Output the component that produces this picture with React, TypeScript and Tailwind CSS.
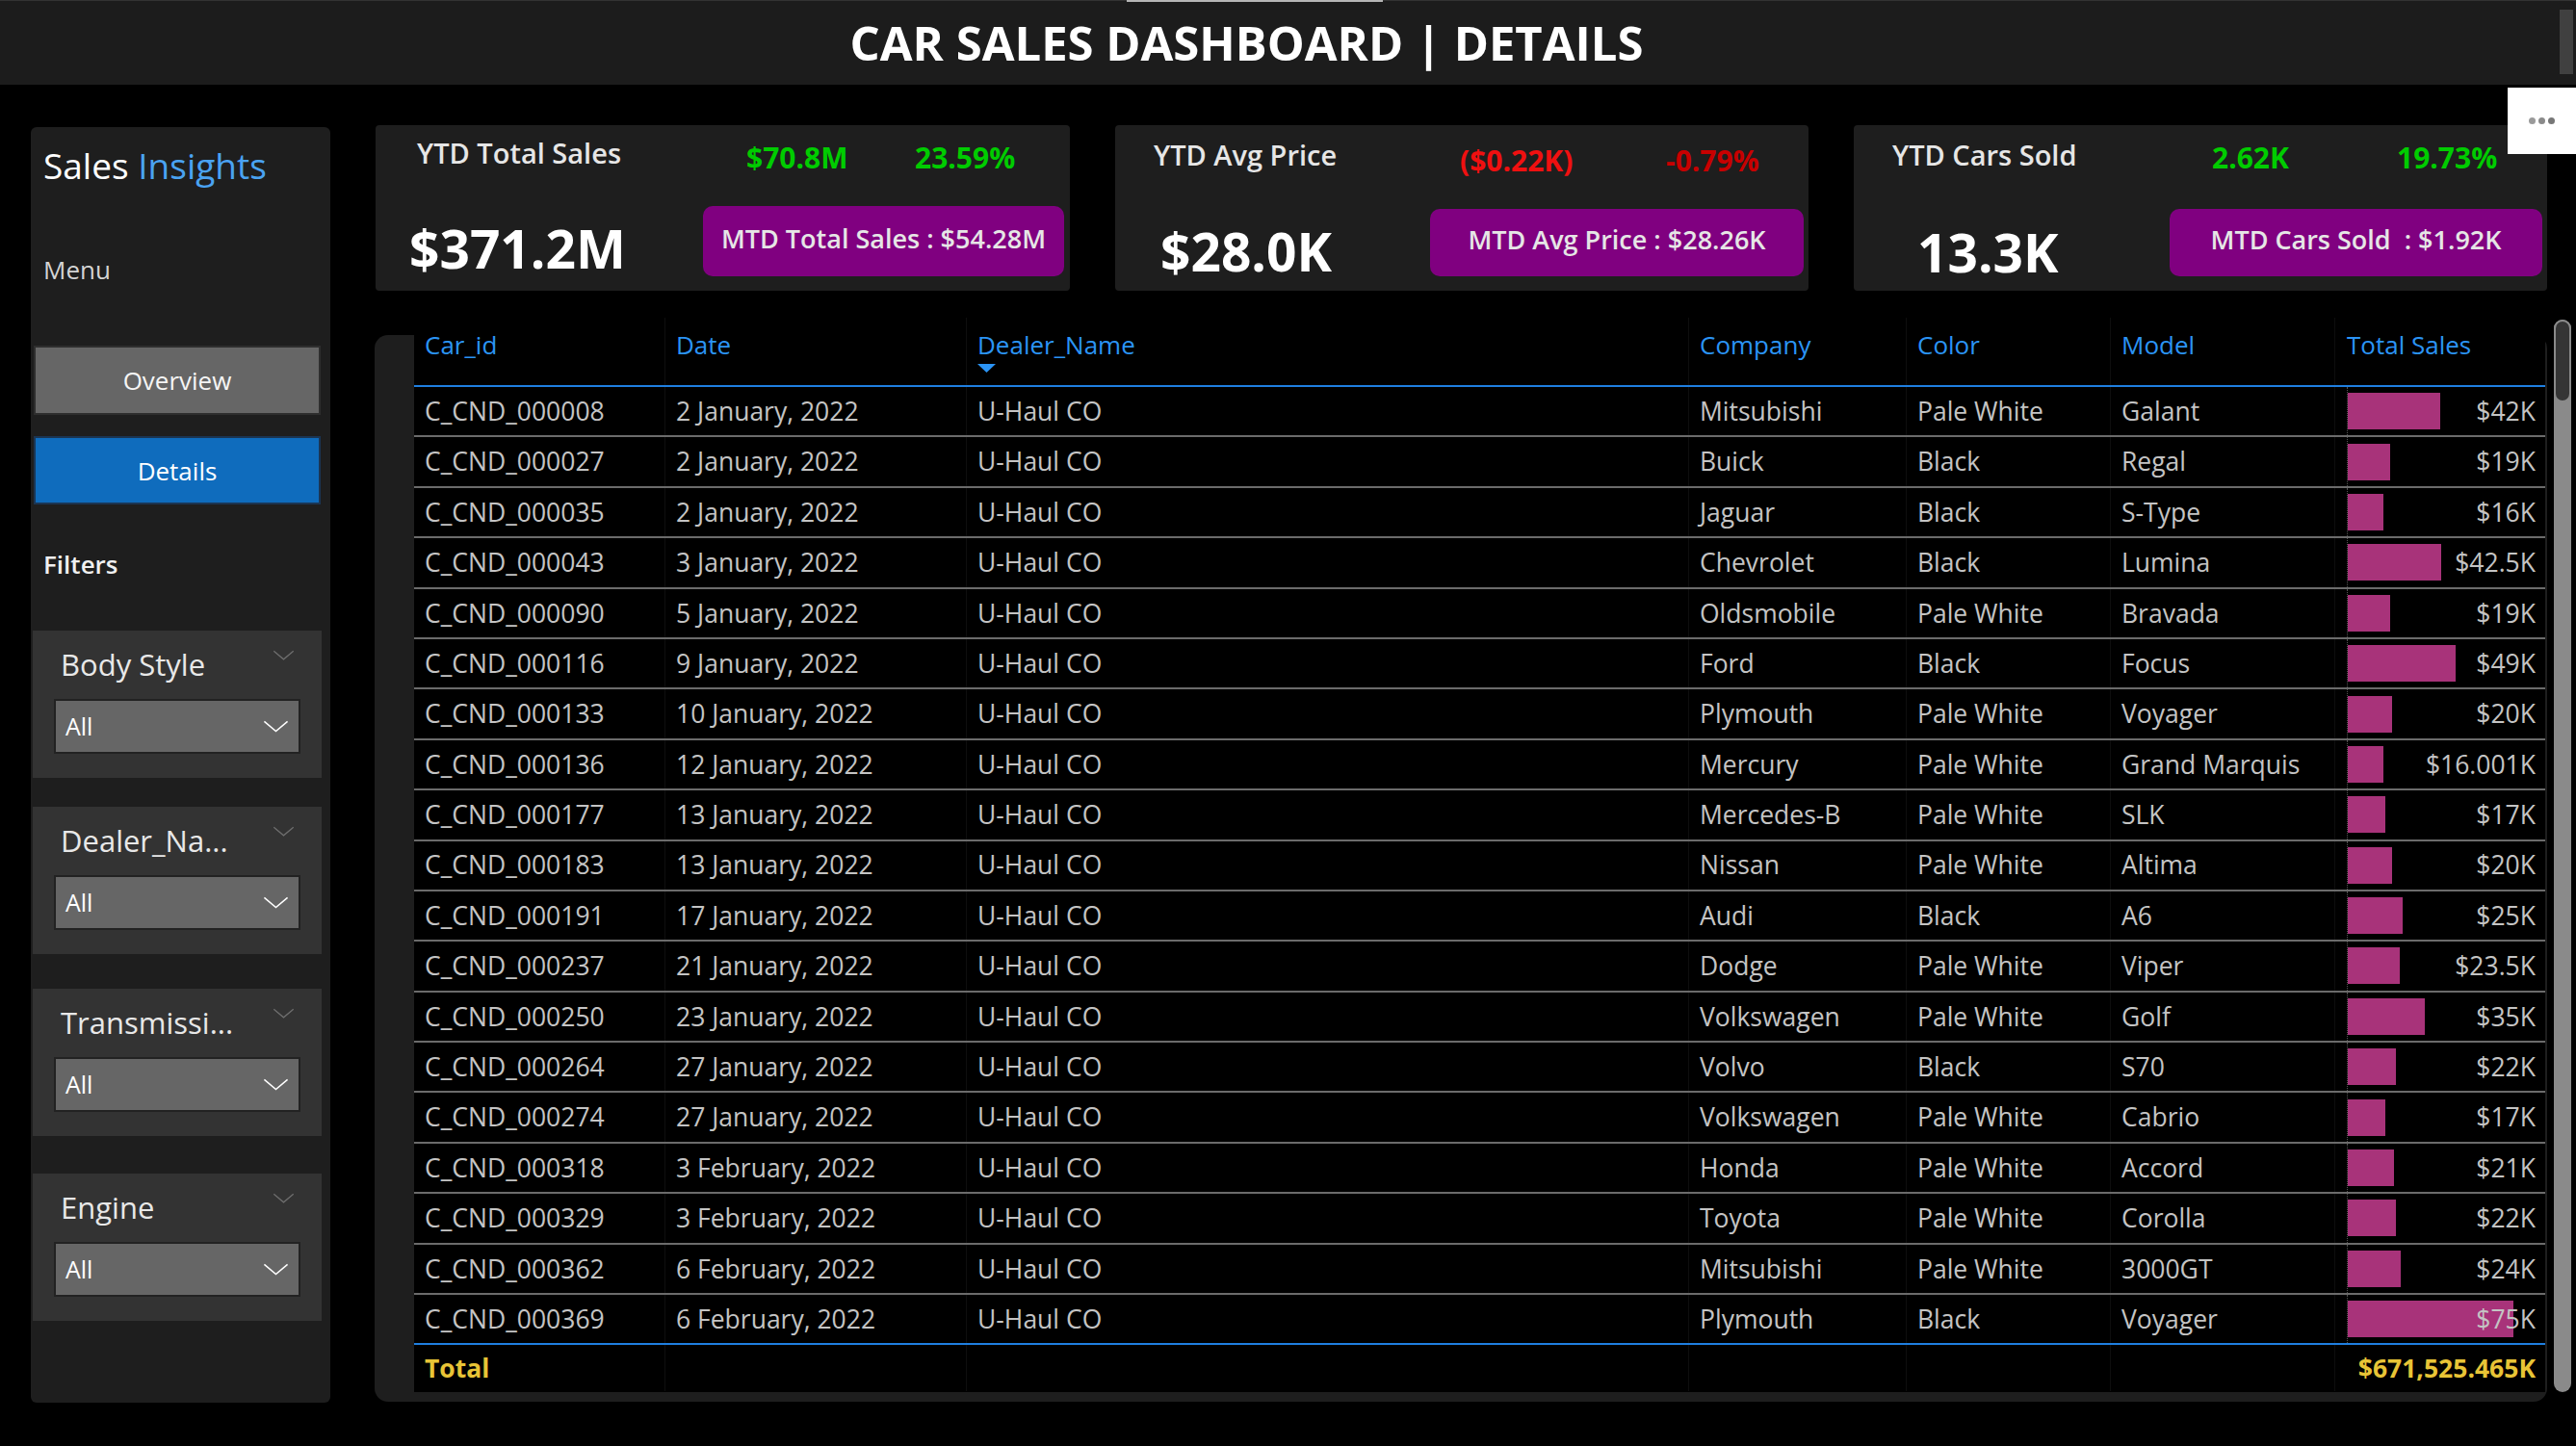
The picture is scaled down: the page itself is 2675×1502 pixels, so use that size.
import React from "react";

type Row = [string, string, string, string, string, number, string];

const rows: Row[] = [
  ["C_CND_000008", "2 January, 2022", "Mitsubishi", "Pale White", "Galant", 42, "$42K"],
  ["C_CND_000027", "2 January, 2022", "Buick", "Black", "Regal", 19, "$19K"],
  ["C_CND_000035", "2 January, 2022", "Jaguar", "Black", "S-Type", 16, "$16K"],
  ["C_CND_000043", "3 January, 2022", "Chevrolet", "Black", "Lumina", 42.5, "$42.5K"],
  ["C_CND_000090", "5 January, 2022", "Oldsmobile", "Pale White", "Bravada", 19, "$19K"],
  ["C_CND_000116", "9 January, 2022", "Ford", "Black", "Focus", 49, "$49K"],
  ["C_CND_000133", "10 January, 2022", "Plymouth", "Pale White", "Voyager", 20, "$20K"],
  ["C_CND_000136", "12 January, 2022", "Mercury", "Pale White", "Grand Marquis", 16.001, "$16.001K"],
  ["C_CND_000177", "13 January, 2022", "Mercedes-B", "Pale White", "SLK", 17, "$17K"],
  ["C_CND_000183", "13 January, 2022", "Nissan", "Pale White", "Altima", 20, "$20K"],
  ["C_CND_000191", "17 January, 2022", "Audi", "Black", "A6", 25, "$25K"],
  ["C_CND_000237", "21 January, 2022", "Dodge", "Pale White", "Viper", 23.5, "$23.5K"],
  ["C_CND_000250", "23 January, 2022", "Volkswagen", "Pale White", "Golf", 35, "$35K"],
  ["C_CND_000264", "27 January, 2022", "Volvo", "Black", "S70", 22, "$22K"],
  ["C_CND_000274", "27 January, 2022", "Volkswagen", "Pale White", "Cabrio", 17, "$17K"],
  ["C_CND_000318", "3 February, 2022", "Honda", "Pale White", "Accord", 21, "$21K"],
  ["C_CND_000329", "3 February, 2022", "Toyota", "Pale White", "Corolla", 22, "$22K"],
  ["C_CND_000362", "6 February, 2022", "Mitsubishi", "Pale White", "3000GT", 24, "$24K"],
  ["C_CND_000369", "6 February, 2022", "Plymouth", "Black", "Voyager", 75, "$75K"],
];

const cols = "grid grid-cols-[260px_313px_750px_226px_212px_233px_219px]";
const cell = "pl-[11px] flex items-center border-l border-[#0e0e0e]";

function Chevron({ className }: { className: string }) {
  return (
    <svg viewBox="0 0 28 14" className={className} fill="none" stroke="currentColor" strokeWidth="1.6">
      <polyline points="1,1.5 14,12.5 27,1.5" />
    </svg>
  );
}

function Filter({ title, mt }: { title: string; mt: string }) {
  return (
    <div className={`${mt} ml-[2px] w-[300px] h-[153px] bg-[#333333] flex flex-col`}>
      <div className="flex items-start pt-[20px]">
        <span className="ml-[29px] w-[220px] text-[31px] leading-none text-[#e8e8e8] whitespace-nowrap">{title}</span>
        <Chevron className="mt-[0px] w-[23px] h-[11px] text-[#6e6e6e]" />
      </div>
      <div className="mt-[20px] ml-[22px] w-[256px] h-[57px] bg-[#666666] border-2 border-[#222222] flex items-center">
        <span className="ml-[10px] text-[25px] leading-none text-white">All</span>
        <Chevron className="ml-auto mr-[10px] w-[27px] h-[13px] text-white" />
      </div>
    </div>
  );
}

export default function App() {
  return (
    <div className="w-[2675px] h-[1502px] bg-black relative overflow-hidden font-['Open_Sans',sans-serif]">
      {/* header */}
      <header className="h-[88px] bg-[#1c1c1c] border-t border-[#333333] flex items-center justify-center pr-[86px]">
        <h1 className="text-[49px] font-bold text-white leading-none whitespace-nowrap">CAR SALES DASHBOARD | DETAILS</h1>
      </header>
      <div className="absolute left-[1170px] top-0 w-[266px] h-[2px] bg-[#b5b5b5]" />
      <div className="absolute left-[2658px] top-[10px] w-[14px] h-[67px] bg-[#404040]" />
      <div className="absolute left-[2604px] top-[91px] w-[71px] h-[69px] bg-white flex items-center justify-center gap-[3px]">
        <span className="w-[7px] h-[7px] rounded-full bg-[#9a9a9a]" />
        <span className="w-[7px] h-[7px] rounded-full bg-[#8a8a8a]" />
        <span className="w-[7px] h-[7px] rounded-full bg-[#777777]" />
      </div>

      <div className="flex items-start">
        {/* sidebar */}
        <aside className="ml-[32px] mt-[44px] w-[311px] h-[1325px] bg-[#1e1e1e] rounded-[6px] flex flex-col shrink-0">
          <div className="ml-[13px] mt-[21px] text-[37px] leading-none whitespace-nowrap">
            <span className="text-white">Sales </span>
            <span className="text-[#4aa3f2]">Insights</span>
          </div>
          <div className="ml-[13px] mt-[77px] text-[26px] leading-none text-[#d4d4d4]">Menu</div>
          <div className="ml-[3px] mt-[66px] w-[298px] h-[72px] bg-[#666666] border-2 border-[#2e2e2e] flex items-center justify-center text-[26px] leading-none text-[#f5f5f5]">
            Overview
          </div>
          <div className="ml-[3px] mt-[22px] w-[298px] h-[71px] bg-[#0f6cbd] border-2 border-[#1b3553] flex items-center justify-center text-[26px] leading-none text-white">
            Details
          </div>
          <div className="ml-[13px] mt-[49px] text-[26px] leading-none font-semibold text-[#f0f0f0]">Filters</div>
          <Filter title="Body Style" mt="mt-[56px]" />
          <Filter title="Dealer_Na..." mt="mt-[30px]" />
          <Filter title="Transmissi..." mt="mt-[36px]" />
          <Filter title="Engine" mt="mt-[39px]" />
        </aside>

        {/* main */}
        <main className="ml-[46px] mt-[42px] flex flex-col">
          <div className="flex items-start gap-[47px] ml-[1px]">
            {/* card 1 */}
            <div className="w-[721px] h-[172px] bg-[#1e1e1e] rounded-[4px] flex flex-col">
              <div className="flex items-start pt-[14px] leading-none whitespace-nowrap">
                <span className="ml-[43px] w-[342px] text-[29px] font-semibold text-[#e6e6e6]">YTD Total Sales</span>
                <span className="mt-[5px] w-[175px] text-[30px] font-bold text-[#00cc00]">$70.8M</span>
                <span className="mt-[5px] text-[30px] font-bold text-[#00cc00]">23.59%</span>
              </div>
              <div className="flex items-start mt-[35px]">
                <span className="ml-[35px] mt-[16px] w-[305px] text-[55px] font-bold leading-none text-white">$371.2M</span>
                <div className="w-[375px] h-[73px] pb-[7px] rounded-[10px] bg-[#800080] flex items-center justify-center text-[27px] font-semibold leading-none text-[#e6e6e6] whitespace-pre">
                  MTD Total Sales : $54.28M
                </div>
              </div>
            </div>
            {/* card 2 */}
            <div className="w-[720px] h-[172px] bg-[#1e1e1e] rounded-[4px] flex flex-col">
              <div className="flex items-start pt-[16px] leading-none whitespace-nowrap">
                <span className="ml-[40px] w-[318px] text-[29px] font-semibold text-[#e6e6e6]">YTD Avg Price</span>
                <span className="mt-[6px] w-[214px] text-[30px] font-bold text-[#f01010]">($0.22K)</span>
                <span className="mt-[6px] text-[30px] font-bold text-[#c80000]">-0.79%</span>
              </div>
              <div className="flex items-start mt-[35px]">
                <span className="ml-[47px] mt-[16px] w-[280px] text-[55px] font-bold leading-none text-white">$28.0K</span>
                <div className="w-[388px] h-[70px] pb-[7px] rounded-[10px] bg-[#800080] flex items-center justify-center text-[27px] font-semibold leading-none text-[#e6e6e6] whitespace-pre">
                  MTD Avg Price : $28.26K
                </div>
              </div>
            </div>
            {/* card 3 */}
            <div className="w-[720px] h-[172px] bg-[#1e1e1e] rounded-[4px] flex flex-col">
              <div className="flex items-start pt-[16px] leading-none whitespace-nowrap">
                <span className="ml-[40px] w-[332px] text-[29px] font-semibold text-[#e6e6e6]">YTD Cars Sold</span>
                <span className="mt-[3px] w-[192px] text-[30px] font-bold text-[#00cc00]">2.62K</span>
                <span className="mt-[3px] text-[30px] font-bold text-[#00cc00]">19.73%</span>
              </div>
              <div className="flex items-start mt-[38px]">
                <span className="ml-[66px] mt-[17px] w-[262px] text-[55px] font-bold leading-none text-white">13.3K</span>
                <div className="w-[387px] h-[70px] pb-[7px] rounded-[10px] bg-[#800080] flex items-center justify-center text-[27px] font-semibold leading-none text-[#e6e6e6] whitespace-pre">
                  MTD Cars Sold  : $1.92K
                </div>
              </div>
            </div>
          </div>

          {/* table area */}
          <div className="flex items-start gap-[7px]">
            <div className="mt-[46px] w-[2256px] h-[1108px] rounded-[14px] bg-[#1e1e1e] flex items-start">
              <div className="-mt-[18px] ml-[41px] w-[2213px] h-[1116px] bg-black flex flex-col">
                {/* header */}
                <div className={`${cols} h-[72px] border-b-2 border-[#1f7fe0] text-[26px] leading-[32px] text-[#2b94f5]`}>
                  <div className="pl-[11px] pt-[12px]">Car_id</div>
                  <div className="pl-[11px] pt-[12px] border-l border-[#0e0e0e]">Date</div>
                  <div className="pl-[11px] pt-[12px] border-l border-[#0e0e0e] flex flex-col">
                    <span>Dealer_Name</span>
                    <svg viewBox="0 0 19 9" className="w-[19px] h-[9px] mt-[4px]">
                      <polygon points="0,0 19,0 9.5,9" fill="#2b94f5" />
                    </svg>
                  </div>
                  <div className="pl-[11px] pt-[12px] border-l border-[#0e0e0e]">Company</div>
                  <div className="pl-[11px] pt-[12px] border-l border-[#0e0e0e]">Color</div>
                  <div className="pl-[11px] pt-[12px] border-l border-[#0e0e0e]">Model</div>
                  <div className="pl-[12px] pt-[12px] border-l border-[#0e0e0e]">Total Sales</div>
                </div>
                {/* rows */}
                {rows.map((r, i) => (
                  <div
                    key={r[0]}
                    className={`${cols} h-[52.4px] shrink-0 border-b-2 text-[26.5px] leading-none text-[#c4c4c4] whitespace-nowrap ${
                      i === rows.length - 1 ? "border-[#1f7fe0]" : "border-[#6b6b6b]"
                    }`}
                  >
                    <div className="pl-[11px] flex items-center">{r[0]}</div>
                    <div className={cell}>{r[1]}</div>
                    <div className={cell}>U-Haul CO</div>
                    <div className={cell}>{r[2]}</div>
                    <div className={cell}>{r[3]}</div>
                    <div className={cell}>{r[4]}</div>
                    <div className="border-l border-[#0e0e0e] pl-[12px] flex">
                      <div className="flex-1 grid items-center border-l border-dotted border-[#555555]">
                        <div
                          className="col-start-1 row-start-1 h-[38px] bg-[#a8337a]"
                          style={{ width: `${r[5] * 2.29}px` }}
                        />
                        <span className="col-start-1 row-start-1 justify-self-end pr-[10px]">{r[6]}</span>
                      </div>
                    </div>
                  </div>
                ))}
                {/* total */}
                <div className={`${cols} h-[48px] shrink-0 text-[26.5px] leading-none font-bold text-[#e8c436]`}>
                  <div className="pl-[11px] flex items-center">Total</div>
                  <div className="border-l border-[#0e0e0e]" />
                  <div className="border-l border-[#0e0e0e]" />
                  <div className="border-l border-[#0e0e0e]" />
                  <div className="border-l border-[#0e0e0e]" />
                  <div className="border-l border-[#0e0e0e]" />
                  <div className="border-l border-[#0e0e0e] flex items-center justify-end pr-[10px]">$671,525.465K</div>
                </div>
              </div>
            </div>
            {/* scrollbar */}
            <div className="mt-[30px] w-[18px] h-[1114px] rounded-full bg-[#8a8a8a] flex flex-col">
              <div className="h-[86px] rounded-full bg-[#353535] border-2 border-[#8a8a8a]" />
            </div>
          </div>
        </main>
      </div>
    </div>
  );
}
